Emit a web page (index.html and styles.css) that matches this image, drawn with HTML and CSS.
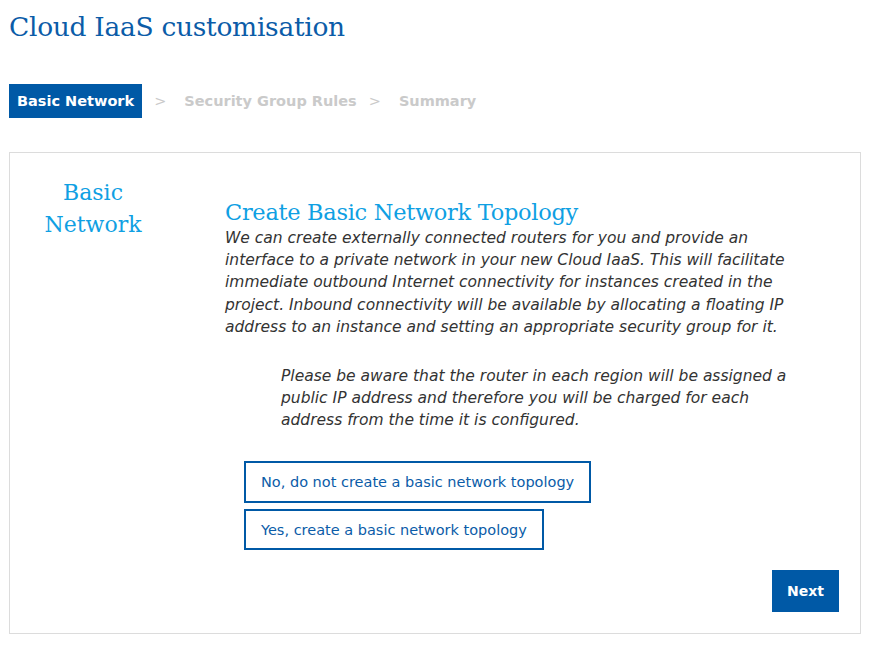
FILE: index.html
```html
<!DOCTYPE html>
<html>
<head>
<meta charset="utf-8">
<link rel="stylesheet" href="styles.css">
</head>
<body>
<h1 class="title">Cloud IaaS customisation</h1>
<nav class="steps">
  <span class="step active">Basic Network</span>
  <span class="sep">&gt;</span>
  <span class="step">Security Group Rules</span>
  <span class="sep">&gt;</span>
  <span class="step">Summary</span>
</nav>
<section class="panel">
  <div class="side">Basic<br>Network</div>
  <div class="main">
    <h2 class="heading">Create Basic Network Topology</h2>
    <p class="intro">We can create externally connected routers for you and provide an interface to a private network in your new Cloud IaaS. This will facilitate immediate outbound Internet connectivity for instances created in the project. Inbound connectivity will be available by allocating a floating IP address to an instance and setting an appropriate security group for it.</p>
    <p class="note">Please be aware that the router in each region will be assigned a public IP address and therefore you will be charged for each address from the time it is configured.</p>
    <div class="choices">
      <button class="choice">No, do not create a basic network topology</button>
      <button class="choice">Yes, create a basic network topology</button>
    </div>
    <div class="actions">
      <button class="next">Next</button>
    </div>
  </div>
</section>
</body>
</html>
```
FILE: styles.css
```css
body {
  margin: 0;
  padding: 0 9px;
  background: #fff;
  font-family: "DejaVu Sans", sans-serif;
}
.title {
  margin: 10px 0 0;
  font-family: "DejaVu Serif", serif;
  font-weight: normal;
  font-size: 26.5px;
  line-height: 34px;
  color: #0b5ca8;
  letter-spacing: -0.3px;
}
.steps {
  margin-top: 40px;
  display: flex;
  align-items: center;
  height: 34px;
  font-size: 14.5px;
  color: #cacaca;
  font-weight: bold;
}
.step.active {
  background: #0059a6;
  color: #fff;
  padding: 0 8px;
  height: 34px;
  line-height: 34px;
}
.sep {
  font-weight: normal;
  margin: 0 18px 0 12px;
}
.panel {
  margin-top: 34px;
  width: 852px;
  height: 482px;
  border: 1px solid #dcdcdc;
  box-sizing: border-box;
  display: flex;
}
.side {
  width: 166px;
  padding-top: 24px;
  text-align: center;
  font-family: "DejaVu Serif", serif;
  font-size: 22px;
  line-height: 32px;
  color: #0fa0e3;
}
.main {
  flex: 1;
  padding: 44px 45px 0 49px;
  display: flex;
  flex-direction: column;
}
.heading {
  margin: 0;
  font-family: "DejaVu Serif", serif;
  font-weight: normal;
  font-size: 22.5px;
  line-height: 30px;
  color: #0fa0e3;
  letter-spacing: -0.3px;
}
.intro {
  margin: 0;
  font-size: 15.5px;
  line-height: 22.2px;
  font-style: italic;
  color: #333;
}
.note {
  margin: 27px 9px 0 56px;
  font-size: 15.5px;
  line-height: 22px;
  font-style: italic;
  color: #333;
}
.choices {
  margin: 30px 0 0 19px;
  display: flex;
  flex-direction: column;
  align-items: flex-start;
  gap: 6px;
}
.choice {
  font-family: "DejaVu Sans", sans-serif;
  font-size: 14.5px;
  color: #0b5ca8;
  background: #fff;
  border: 2px solid #0059a6;
  padding: 0 15px;
  height: 42px;
}
.choice + .choice {
  height: 41px;
}
.actions {
  display: flex;
  justify-content: flex-end;
  margin-top: 20px;
  margin-right: -24px;
}
.next {
  background: #0059a6;
  color: #fff;
  border: none;
  font-family: "DejaVu Sans", sans-serif;
  font-weight: bold;
  font-size: 14px;
  width: 67px;
  height: 42px;
}
```
